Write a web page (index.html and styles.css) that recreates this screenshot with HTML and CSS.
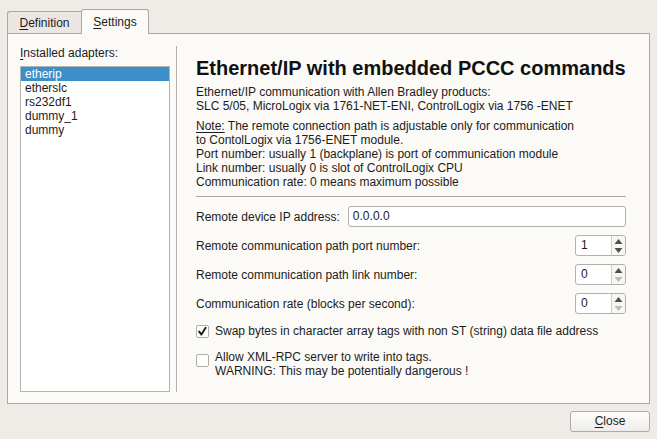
FILE: index.html
```html
<!DOCTYPE html>
<html>
<head>
<meta charset="utf-8">
<link rel="stylesheet" href="styles.css">
</head>
<body>
<div class="window">
  <div class="tabs">
    <div class="tab tab-def"><span class="u">D</span>efinition</div>
    <div class="tab tab-set"><span class="u">S</span>ettings</div>
  </div>
  <div class="pane">
    <div class="left">
      <div class="label"><span class="u">I</span>nstalled adapters:</div>
      <ul class="list">
        <li class="sel">etherip</li>
        <li>etherslc</li>
        <li>rs232df1</li>
        <li>dummy_1</li>
        <li>dummy</li>
      </ul>
    </div>
    <div class="vsep"></div>
    <div class="right">
      <h1 class="title">Ethernet/IP with embedded PCCC commands</h1>
      <p class="desc">Ethernet/IP communication with Allen Bradley products:<br>SLC 5/05, MicroLogix via 1761-NET-ENI, ControlLogix via 1756 -ENET</p>
      <p class="note"><span class="ul">Note:</span> The remote connection path is adjustable only for communication<br>to ContolLogix via 1756-ENET module.<br>Port number: usually 1 (backplane) is port of communication module<br>Link number: usually 0 is slot of ControlLogix CPU<br>Communication rate: 0 means maximum possible</p>
      <div class="hsep"></div>
      <div class="form">
        <div class="row">
          <span class="flabel">Remote device IP address:</span>
          <div class="input">0.0.0.0</div>
        </div>
        <div class="row">
          <span class="flabel">Remote communication path port number:</span>
          <div class="spin">
            <div class="spin-val">1</div>
            <div class="spin-btns">
              <svg class="arr" width="13" height="9" viewBox="0 0 13 9"><path d="M2.5 7 L6.5 2 L10.5 7 Z" fill="#505050"/></svg>
              <svg class="arr" width="13" height="9" viewBox="0 0 13 9"><path d="M2.5 2 L6.5 7 L10.5 2 Z" fill="#505050"/></svg>
            </div>
          </div>
        </div>
        <div class="row">
          <span class="flabel">Remote communication path link number:</span>
          <div class="spin">
            <div class="spin-val">0</div>
            <div class="spin-btns">
              <svg class="arr" width="13" height="9" viewBox="0 0 13 9"><path d="M2.5 7 L6.5 2 L10.5 7 Z" fill="#505050"/></svg>
              <svg class="arr" width="13" height="9" viewBox="0 0 13 9"><path d="M2.5 2 L6.5 7 L10.5 2 Z" fill="#bcbcbc"/></svg>
            </div>
          </div>
        </div>
        <div class="row">
          <span class="flabel">Communication rate (blocks per second):</span>
          <div class="spin">
            <div class="spin-val">0</div>
            <div class="spin-btns">
              <svg class="arr" width="13" height="9" viewBox="0 0 13 9"><path d="M2.5 7 L6.5 2 L10.5 7 Z" fill="#505050"/></svg>
              <svg class="arr" width="13" height="9" viewBox="0 0 13 9"><path d="M2.5 2 L6.5 7 L10.5 2 Z" fill="#bcbcbc"/></svg>
            </div>
          </div>
        </div>
      </div>
      <div class="check check-1">
        <span class="box"><svg width="11" height="11" viewBox="0 0 11 11"><path d="M2.2 5.6 L4.4 8.6 L8.6 1.8" fill="none" stroke="#1a1a1a" stroke-width="1.9" stroke-linecap="round" stroke-linejoin="round"/></svg></span>
        <span class="ctext">Swap bytes in character array tags with non ST (string) data file address</span>
      </div>
      <div class="check check-2">
        <span class="box"></span>
        <span class="ctext">Allow XML-RPC server to write into tags.<br>WARNING: This may be potentially dangerous !</span>
      </div>
    </div>
  </div>
  <div class="footer">
    <button class="btn"><span class="u">C</span>lose</button>
  </div>
</div>
</body>
</html>
```
FILE: styles.css
```css
* { box-sizing: border-box; }
html, body {
  margin: 0;
  padding: 0;
  background: #efebe7;
}
body {
  font-family: "Liberation Sans", Arial, sans-serif;
  font-size: 12px;
  color: #1c1c1c;
}
.window {
  width: 657px;
  height: 439px;
  background: #efebe7;
  overflow: hidden;
}
.u { text-decoration: underline; text-underline-offset: 2px; }
.ul { text-decoration: underline; text-underline-offset: 2px; }

.tabs {
  display: flex;
  align-items: flex-end;
  height: 33px;
  padding-left: 7px;
}
.tab {
  display: flex;
  align-items: center;
  justify-content: center;
  line-height: 14px;
  border: 1px solid #aaa8a4;
  border-bottom: none;
}
.tab-def {
  width: 74px;
  height: 22px;
  border-right: none;
  border-top-left-radius: 3px;
  background: #eae7e3;
  padding-top: 1px;
}
.tab-set {
  width: 68px;
  height: 25px;
  margin-bottom: -1px;
  position: relative;
  z-index: 1;
  background: #fbfaf6;
  border-top-left-radius: 3px;
  border-top-right-radius: 3px;
  padding-bottom: 1px;
}

.pane {
  margin: 0 7px;
  height: 371px;
  border: 1px solid #aaa8a4;
  background: #fbfaf6;
  padding: 12px 23px 11px 12px;
  display: flex;
}
.left {
  width: 150px;
  display: flex;
  flex-direction: column;
}
.label {
  line-height: 14px;
  height: 14px;
  margin-bottom: 6px;
}
.list {
  flex: 1;
  margin: 0;
  padding: 0;
  list-style: none;
  background: #ffffff;
  border: 1px solid #b5b3af;
}
.list li {
  height: 14px;
  line-height: 14px;
  padding-left: 4px;
}
.list li.sel {
  background: #3d8fca;
  color: #ffffff;
}
.vsep {
  width: 1px;
  margin-left: 6px;
  background: #b2b0ac;
}
.right {
  flex: 1;
  margin-left: 19px;
  padding-top: 11px;
}
.title {
  margin: 0;
  font-size: 20px;
  font-weight: bold;
  line-height: 23px;
  color: #111;
}
.desc {
  margin: 5px 0 0;
  line-height: 14px;
}
.note {
  margin: 6px 0 0;
  line-height: 14px;
}
.hsep {
  margin-top: 7px;
  height: 1px;
  background: #a9a7a3;
}
.form {
  margin-top: 9px;
  display: flex;
  flex-direction: column;
  gap: 8px;
}
.row {
  display: flex;
  align-items: center;
  height: 21px;
}
.flabel { line-height: 14px; }
.input {
  flex: 1;
  margin-left: 8px;
  height: 21px;
  line-height: 19px;
  padding-left: 4px;
  background: #ffffff;
  border: 1px solid #b2b0ac;
  border-radius: 3px;
}
.spin {
  margin-left: auto;
  width: 51px;
  height: 21px;
  display: flex;
  background: #ffffff;
  border: 1px solid #b2b0ac;
  border-radius: 3px;
  overflow: hidden;
}
.spin-val {
  flex: 1;
  line-height: 19px;
  padding-left: 5px;
}
.spin-btns {
  width: 14px;
  border-left: 1px solid #cfcdc9;
  background: #f7f6f3;
  display: flex;
  flex-direction: column;
  align-items: center;
  justify-content: center;
}
.arr { display: block; }

.check {
  display: flex;
  gap: 6px;
  line-height: 14px;
}
.check-1 {
  margin-top: 10px;
  align-items: center;
}
.check-2 {
  margin-top: 12px;
  align-items: flex-start;
}
.check-2 .box { margin-top: 4px; }
.box {
  width: 13px;
  height: 13px;
  flex: none;
  background: #ffffff;
  border: 1px solid #b0aeaa;
  border-radius: 2px;
  display: flex;
  align-items: center;
  justify-content: center;
}
.box svg { display: block; }

.footer {
  display: flex;
  justify-content: flex-end;
  padding: 7px 7px 0 0;
}
.btn {
  width: 80px;
  height: 21px;
  padding: 0;
  font-family: "Liberation Sans", Arial, sans-serif;
  font-size: 12px;
  color: #1c1c1c;
  line-height: 19px;
  border: 1px solid #aeaca8;
  border-radius: 3px;
  background: linear-gradient(#fdfdfc, #eeedea);
}
```
